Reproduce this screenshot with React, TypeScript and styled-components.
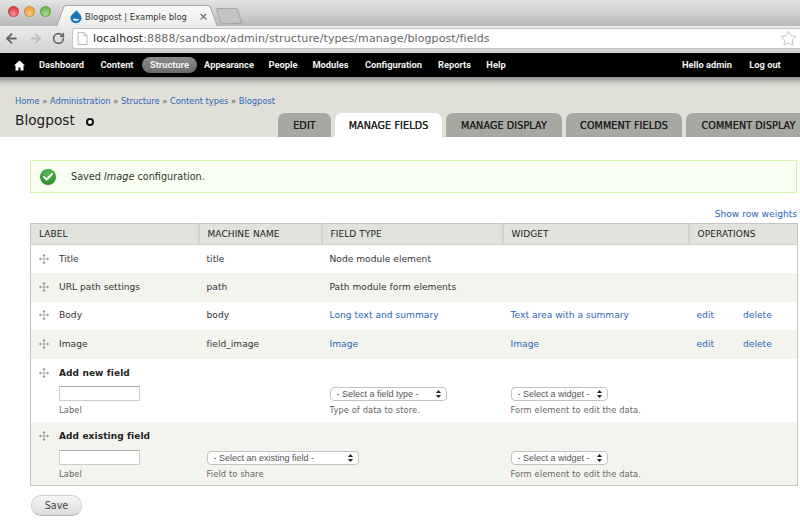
import React from 'react'
import styled, { createGlobalStyle } from 'styled-components'
import { ArrowLeft, ArrowRight, RotateCw, Star, Check } from 'lucide-react'

const GlobalStyle = createGlobalStyle`
	html, body {
		margin: 0;
		padding: 0;
		background: #fff;
	}
	body {
		width: 800px;
		height: 520px;
		overflow: hidden;
		font-family: "DejaVu Sans", "Liberation Sans", sans-serif;
		font-size: 10px;
		color: #333;
	}
`

const Page = styled.div`
	width: 800px;
	height: 520px;
	overflow: hidden;
`

/* browser chrome */
const TabStrip = styled.div`
	height: 26px;
	box-sizing: border-box;
	padding: 5px 0 0 8px;
	display: flex;
	background: linear-gradient(#e4e4e4, #b9b9b9);
`
const Lights = styled.div`
	display: flex;
	gap: 5px;
	padding-top: 1px;
	height: 11px;
`
const Light = styled.span<{ $colour: string }>`
	width: 11px;
	height: 11px;
	border-radius: 50%;
	background: radial-gradient(circle at 50% 75%, #fff6 0, transparent 60%), ${p => p.$colour};
	box-shadow: inset 0 0 0 1px #0003;
`
const BrowserTab = styled.div`
	position: relative;
	margin-left: 15px;
	width: 142px;
	height: 21px;
	box-sizing: border-box;
	padding: 5px 0 0 4px;
	display: flex;
	align-items: flex-start;
	gap: 3px;
	background: linear-gradient(#fafafa, #ececec);
	border-top: 1px solid #aaa;
	font-size: 8.4px;
	color: #333;
	z-index: 1;
	&::before,
	&::after {
		content: '';
		position: absolute;
		top: -1px;
		bottom: 0;
		width: 12px;
		background: linear-gradient(#fafafa, #ececec);
		border-top: 1px solid #aaa;
		z-index: -1;
	}
	&::before {
		left: -6px;
		transform: skewX(-20deg);
		border-left: 1px solid #999;
		border-top-left-radius: 3px;
	}
	&::after {
		right: -6px;
		transform: skewX(20deg);
		border-right: 1px solid #999;
		border-top-right-radius: 3px;
	}
`
const TabTitle = styled.span`
	white-space: nowrap;
	line-height: 13px;
`
const TabClose = styled.span`
	position: absolute;
	right: 0;
	top: 4px;
	font-size: 11px;
	color: #555;
`
const NewTab = styled.div`
	width: 20px;
	height: 14px;
	margin: 3px 0 0 10px;
	background: #c3c3c3;
	border: 1px solid #a4a4a4;
	border-radius: 2px 2px 3px 3px;
	transform: skewX(16deg);
`
const Toolbar = styled.div`
	height: 27px;
	box-sizing: border-box;
	padding: 2px 0 4px 4px;
	display: flex;
	align-items: center;
	background: linear-gradient(#ececec, #d2d2d2);
`
const NavIcons = styled.div`
	display: flex;
	align-items: center;
	gap: 9px;
	width: 68px;
	flex: none;
`
const Omnibox = styled.div`
	flex: 1;
	height: 21px;
	box-sizing: border-box;
	padding: 0 3px 0 4px;
	display: flex;
	align-items: center;
	gap: 5px;
	background: #fff;
	border: 1px solid #c4c4c4;
	border-right: 0;
	border-radius: 3px 0 0 3px;
`
const Url = styled.div`
	flex: 1;
	font-size: 11px;
	color: #666;
	white-space: nowrap;
	letter-spacing: 0.1px;
	b {
		font-weight: 400;
		color: #222;
	}
`

/* admin toolbar */
const AdminBar = styled.div`
	height: 24px;
	box-sizing: border-box;
	padding: 0 19px 0 14px;
	display: flex;
	align-items: center;
	justify-content: space-between;
	background: #000;
`
const AdminList = styled.div`
	display: flex;
	align-items: center;
`
const UserList = styled(AdminList)`
	gap: 16px;
`
const HomeIcon = styled.svg`
	flex: none;
	margin-right: 6px;
`
const AdminLink = styled.a<{ $active?: boolean; $w: number }>`
	width: ${p => p.$w}px;
	height: 16px;
	line-height: 16px;
	text-align: center;
	flex: none;
	font-family: Roboto, "Liberation Sans", sans-serif;
	font-size: 9.3px;
	font-weight: 700;
	color: #f2f2f2;
	white-space: nowrap;
	border-radius: 8px;
	background: ${p => (p.$active ? 'linear-gradient(#8c8c8c, #6b6b6b)' : 'none')};
`

/* page header */
const Header = styled.div`
	height: 60px;
	box-sizing: border-box;
	padding: 18px 0 0 15px;
	display: flex;
	flex-direction: column;
	background: linear-gradient(#8f8f8b, #d9d9d2 7px, #e0e0d8 12px);
`
const Crumbs = styled.div`
	height: 12px;
	line-height: 12px;
	font-size: 8.3px;
	color: #555;
	white-space: nowrap;
`
const HeaderRow = styled.div`
	flex: 1;
	display: flex;
	justify-content: space-between;
	align-items: flex-end;
	margin-top: 6px;
`
const PageTitle = styled.h1`
	margin: -2px 0 8px;
	display: flex;
	align-items: center;
	gap: 11px;
	font-size: 13.7px;
	line-height: 18px;
	font-weight: 400;
	color: #222;
`
const ShortcutDot = styled.span`
	width: 4px;
	height: 4px;
	margin-top: 4px;
	border: 2px solid #111;
	border-radius: 50%;
	background: #fff;
`
const Tabs = styled.div`
	width: 522px;
	flex: none;
	display: flex;
	gap: 4px;
	overflow: hidden;
`
const Tab = styled.a<{ $active?: boolean; $w: number }>`
	width: ${p => p.$w}px;
	flex: none;
	height: 24px;
	line-height: 25px;
	text-align: center;
	font-size: 9.6px;
	font-weight: 400;
	color: #222;
	letter-spacing: 0.12px;
	text-shadow: 0 0 0.4px #222;
	white-space: nowrap;
	border-radius: 7px 7px 0 0;
	background: ${p => (p.$active ? '#fff' : '#a7a8a1')};
`

/* content */
const Content = styled.div`
	padding: 23px 3px 0 30px;
`
const Message = styled.div`
	height: 33px;
	box-sizing: border-box;
	padding-left: 9px;
	display: flex;
	align-items: center;
	gap: 15px;
	background: #f8fff0;
	border: 1px solid #d3f5a9;
	color: #333;
	font-size: 9.7px;
	em {
		font-style: italic;
	}
`
const StatusIcon = styled.span`
	width: 16px;
	height: 16px;
	display: flex;
	align-items: center;
	justify-content: center;
	border-radius: 50%;
	background: radial-gradient(circle at 50% 30%, #5cb85c, #1c861c);
	color: #fff;
`
const WeightsRow = styled.div`
	margin-top: 15px;
	height: 15px;
	line-height: 13px;
	text-align: right;
	font-size: 9.1px;
`
const Link = styled.a`
	color: #2b66b8;
	white-space: nowrap;
`
const Table = styled.table`
	width: 767px;
	table-layout: fixed;
	border-collapse: collapse;
	border: 1px solid #c6c6c0;
	font-size: 9.1px;
	letter-spacing: 0.02px;
`
const HeadCell = styled.th`
	height: 21px;
	padding: 0 0 0 8px;
	box-sizing: border-box;
	text-align: left;
	font-weight: 400;
	font-size: 9px;
	letter-spacing: 0.08px;
	color: #222;
	background: #e1e2dc;
	border-bottom: 1px solid #d2d2cc;
	& + & {
		border-left: 2px solid #d2d2cc;
	}
`
const Row = styled.tr<{ $even?: boolean }>`
	background: ${p => (p.$even ? '#f3f4ee' : '#fff')};
`
const Cell = styled.td`
	height: 28.5px;
	padding: 0 0 1px 8px;
	box-sizing: border-box;
	color: #333;
`
const WithHandle = styled.div`
	display: flex;
	align-items: center;
	gap: 10px;
`
const Ops = styled.div`
	display: flex;
	gap: 29px;
`
const FieldTitle = styled.strong`
	font-weight: 700;
	font-size: 9px;
	letter-spacing: 0.1px;
	color: #222;
`
const TitleCell = styled.td<{ $h: number }>`
	height: ${p => p.$h}px;
	padding: 4px 0 0 8px;
	box-sizing: border-box;
`
const FormCell = styled.td<{ $indent?: boolean }>`
	height: 39px;
	padding: 3px 0 0 ${p => (p.$indent ? '28px' : '8px')};
	box-sizing: border-box;
	vertical-align: top;
`
const TextInput = styled.input`
	display: block;
	width: 81px;
	height: 15px;
	box-sizing: border-box;
	padding: 0;
	background: #fff;
	border: 1px solid #ccc;
	border-top-color: #aaa;
	border-radius: 1px;
`
const Hint = styled.div`
	margin-top: 3px;
	height: 12px;
	line-height: 12px;
	font-size: 8.3px;
	color: #666;
	letter-spacing: 0.1px;
	white-space: nowrap;
`
const SelectWrap = styled.div<{ $w: number }>`
	position: relative;
	width: ${p => p.$w}px;
	height: 14px;
	margin-top: 1px;
`
const Select = styled.select`
	display: block;
	width: 100%;
	height: 14px;
	box-sizing: border-box;
	padding: 0 0 0 6px;
	appearance: none;
	background: #fff;
	border: 1px solid #c2c2c2;
	border-radius: 4px;
	font-family: "Liberation Sans", Arial, sans-serif;
	font-size: 9px;
	line-height: 12px;
	color: #555;
`
const SelectArrows = styled.svg`
	position: absolute;
	right: 6px;
	top: 3px;
	pointer-events: none;
`
const SaveButton = styled.button`
	display: block;
	width: 51px;
	height: 21px;
	margin: 9px 0 0 1px;
	padding: 0;
	background: linear-gradient(#f6f6f6, #dcdcdc);
	border: 1px solid #d0d0d0;
	border-bottom-color: #b5b5b5;
	border-radius: 10px;
	font-family: "DejaVu Sans", sans-serif;
	font-size: 9.6px;
	color: #444;
`

const DragHandle = () => (
	<svg width="10" height="10" viewBox="0 0 10 10" fill="#777" style={{ flex: 'none' }}>
		<path d="M4.7 1.5h.6v7h-.6zM1.5 4.7h7v.6h-7z" />
		<path d="M5 0l1.5 1.7h-3zM5 10L3.5 8.3h3zM0 5l1.7-1.5v3zM10 5L8.3 3.5v3z" />
	</svg>
)

const DrupalDrop = () => (
	<svg width="12" height="14" viewBox="0 0 12 14" style={{ flex: 'none', marginTop: -1 }}>
		<path d="M6.5 0C7 2 11.5 4 11.5 8.3A5.6 5.6 0 0 1 .4 8.3C.4 4.500 5 3 6.500 0z" fill="#1a78b8" />
		<path d="M3 9.500c1-1.500 2.200-1.200 3-.4s2-1 3 .3c-.5 1.800-5.500 2-6 .1z" fill="#fff" />
	</svg>
)

const PageIcon = () => (
	<svg width="11" height="13" viewBox="0 0 11 13" fill="#fbfbfb" stroke="#bdbdbd" style={{ flex: 'none' }}>
		<path d="M1 .5h6l3 3v9H1zM7 .5v3h3" />
	</svg>
)

const Arrows = () => (
	<SelectArrows width="5" height="8" viewBox="0 0 5 8" fill="#222">
		<path d="M2.500 0L5 3H0zM2.500 8L0 5h5z" />
	</SelectArrows>
)

const adminLinks: [string, number][] = [
	['Dashboard', 61],
	['Content', 50],
	['Structure', 55],
	['Appearance', 64],
	['People', 44],
	['Modules', 51],
	['Configuration', 75],
	['Reports', 47],
	['Help', 36],
]

const tabs: [string, number][] = [
	['EDIT', 53],
	['MANAGE FIELDS', 107],
	['MANAGE DISPLAY', 116],
	['COMMENT FIELDS', 116],
	['COMMENT DISPLAY', 125],
]

const columns: [string, number][] = [
	['LABEL', 168],
	['MACHINE NAME', 123],
	['FIELD TYPE', 181],
	['WIDGET', 186],
	['OPERATIONS', 109],
]

const rows = [
	{ label: 'Title', name: 'title', type: 'Node module element' },
	{ label: 'URL path settings', name: 'path', type: 'Path module form elements' },
	{ label: 'Body', name: 'body', type: 'Long text and summary', widget: 'Text area with a summary' },
	{ label: 'Image', name: 'field_image', type: 'Image', widget: 'Image' },
]

const App = () => (
	<Page>
		<GlobalStyle />
		<TabStrip>
			<Lights>
				<Light $colour="#e8484b" />
				<Light $colour="#eeaa3c" />
				<Light $colour="#78bb55" />
			</Lights>
			<BrowserTab>
				<DrupalDrop />
				<TabTitle>Blogpost | Example blog</TabTitle>
				<TabClose>×</TabClose>
			</BrowserTab>
			<NewTab />
		</TabStrip>
		<Toolbar>
			<NavIcons>
				<ArrowLeft size={15} strokeWidth={3} color="#666" />
				<ArrowRight size={15} strokeWidth={3} color="#bdbdbd" />
				<RotateCw size={13} strokeWidth={3} color="#666" />
			</NavIcons>
			<Omnibox>
				<PageIcon />
				<Url>
					<b>localhost</b>:8888/sandbox/admin/structure/types/manage/blogpost/fields
				</Url>
				<Star size={17} strokeWidth={1} color="#aaa" />
			</Omnibox>
		</Toolbar>
		<AdminBar>
			<AdminList>
				<HomeIcon width="11" height="11" viewBox="0 0 11 11" fill="#fff">
					<path d="M5.500.5L0 5.500h1.500v5h3v-3h2v3h3v-5H11z" />
				</HomeIcon>
				{adminLinks.map(([text, w]) => (
					<AdminLink key={text} $w={w} $active={text === 'Structure'}>
						{text}
					</AdminLink>
				))}
			</AdminList>
			<UserList>
				<AdminLink $w={52}>
					Hello <span>admin</span>
				</AdminLink>
				<AdminLink $w={32}>Log out</AdminLink>
			</UserList>
		</AdminBar>
		<Header>
			<Crumbs>
				<Link>Home</Link> » <Link>Administration</Link> » <Link>Structure</Link> » <Link>Content types</Link> »{' '}
				<Link>Blogpost</Link>
			</Crumbs>
			<HeaderRow>
				<PageTitle>
					Blogpost
					<ShortcutDot />
				</PageTitle>
				<Tabs>
					{tabs.map(([text, w]) => (
						<Tab key={text} $w={w} $active={text === 'MANAGE FIELDS'}>
							{text}
						</Tab>
					))}
				</Tabs>
			</HeaderRow>
		</Header>
		<Content>
			<Message>
				<StatusIcon>
					<Check size={12} strokeWidth={4} />
				</StatusIcon>
				<span>
					Saved <em>Image</em> configuration.
				</span>
			</Message>
			<WeightsRow>
				<Link>Show row weights</Link>
			</WeightsRow>
			<Table>
				<colgroup>
					{columns.map(([text, w]) => (
						<col key={text} style={{ width: w }} />
					))}
				</colgroup>
				<thead>
					<tr>
						{columns.map(([text]) => (
							<HeadCell key={text}>{text}</HeadCell>
						))}
					</tr>
				</thead>
				<tbody>
					{rows.map((row, i) => (
						<Row key={row.name} $even={i % 2 === 1}>
							<Cell>
								<WithHandle>
									<DragHandle />
									{row.label}
								</WithHandle>
							</Cell>
							<Cell>{row.name}</Cell>
							<Cell>{row.widget ? <Link>{row.type}</Link> : row.type}</Cell>
							<Cell>{row.widget && <Link>{row.widget}</Link>}</Cell>
							<Cell>
								{row.widget && (
									<Ops>
										<Link>edit</Link>
										<Link>delete</Link>
									</Ops>
								)}
							</Cell>
						</Row>
					))}
					<Row>
						<TitleCell colSpan={5} $h={24}>
							<WithHandle>
								<DragHandle />
								<FieldTitle>Add new field</FieldTitle>
							</WithHandle>
						</TitleCell>
					</Row>
					<Row>
						<FormCell $indent>
							<TextInput />
							<Hint>Label</Hint>
						</FormCell>
						<FormCell />
						<FormCell>
							<SelectWrap $w={117}>
								<Select>
									<option>- Select a field type -</option>
								</Select>
								<Arrows />
							</SelectWrap>
							<Hint>Type of data to store.</Hint>
						</FormCell>
						<FormCell>
							<SelectWrap $w={97}>
								<Select>
									<option>- Select a widget -</option>
								</Select>
								<Arrows />
							</SelectWrap>
							<Hint>Form element to edit the data.</Hint>
						</FormCell>
						<FormCell />
					</Row>
					<Row $even>
						<TitleCell colSpan={5} $h={25}>
							<WithHandle>
								<DragHandle />
								<FieldTitle>Add existing field</FieldTitle>
							</WithHandle>
						</TitleCell>
					</Row>
					<Row $even>
						<FormCell $indent>
							<TextInput />
							<Hint>Label</Hint>
						</FormCell>
						<FormCell>
							<SelectWrap $w={152}>
								<Select>
									<option>- Select an existing field -</option>
								</Select>
								<Arrows />
							</SelectWrap>
							<Hint>Field to share</Hint>
						</FormCell>
						<FormCell />
						<FormCell>
							<SelectWrap $w={97}>
								<Select>
									<option>- Select a widget -</option>
								</Select>
								<Arrows />
							</SelectWrap>
							<Hint>Form element to edit the data.</Hint>
						</FormCell>
						<FormCell />
					</Row>
				</tbody>
			</Table>
			<SaveButton>Save</SaveButton>
		</Content>
	</Page>
)

export default App
